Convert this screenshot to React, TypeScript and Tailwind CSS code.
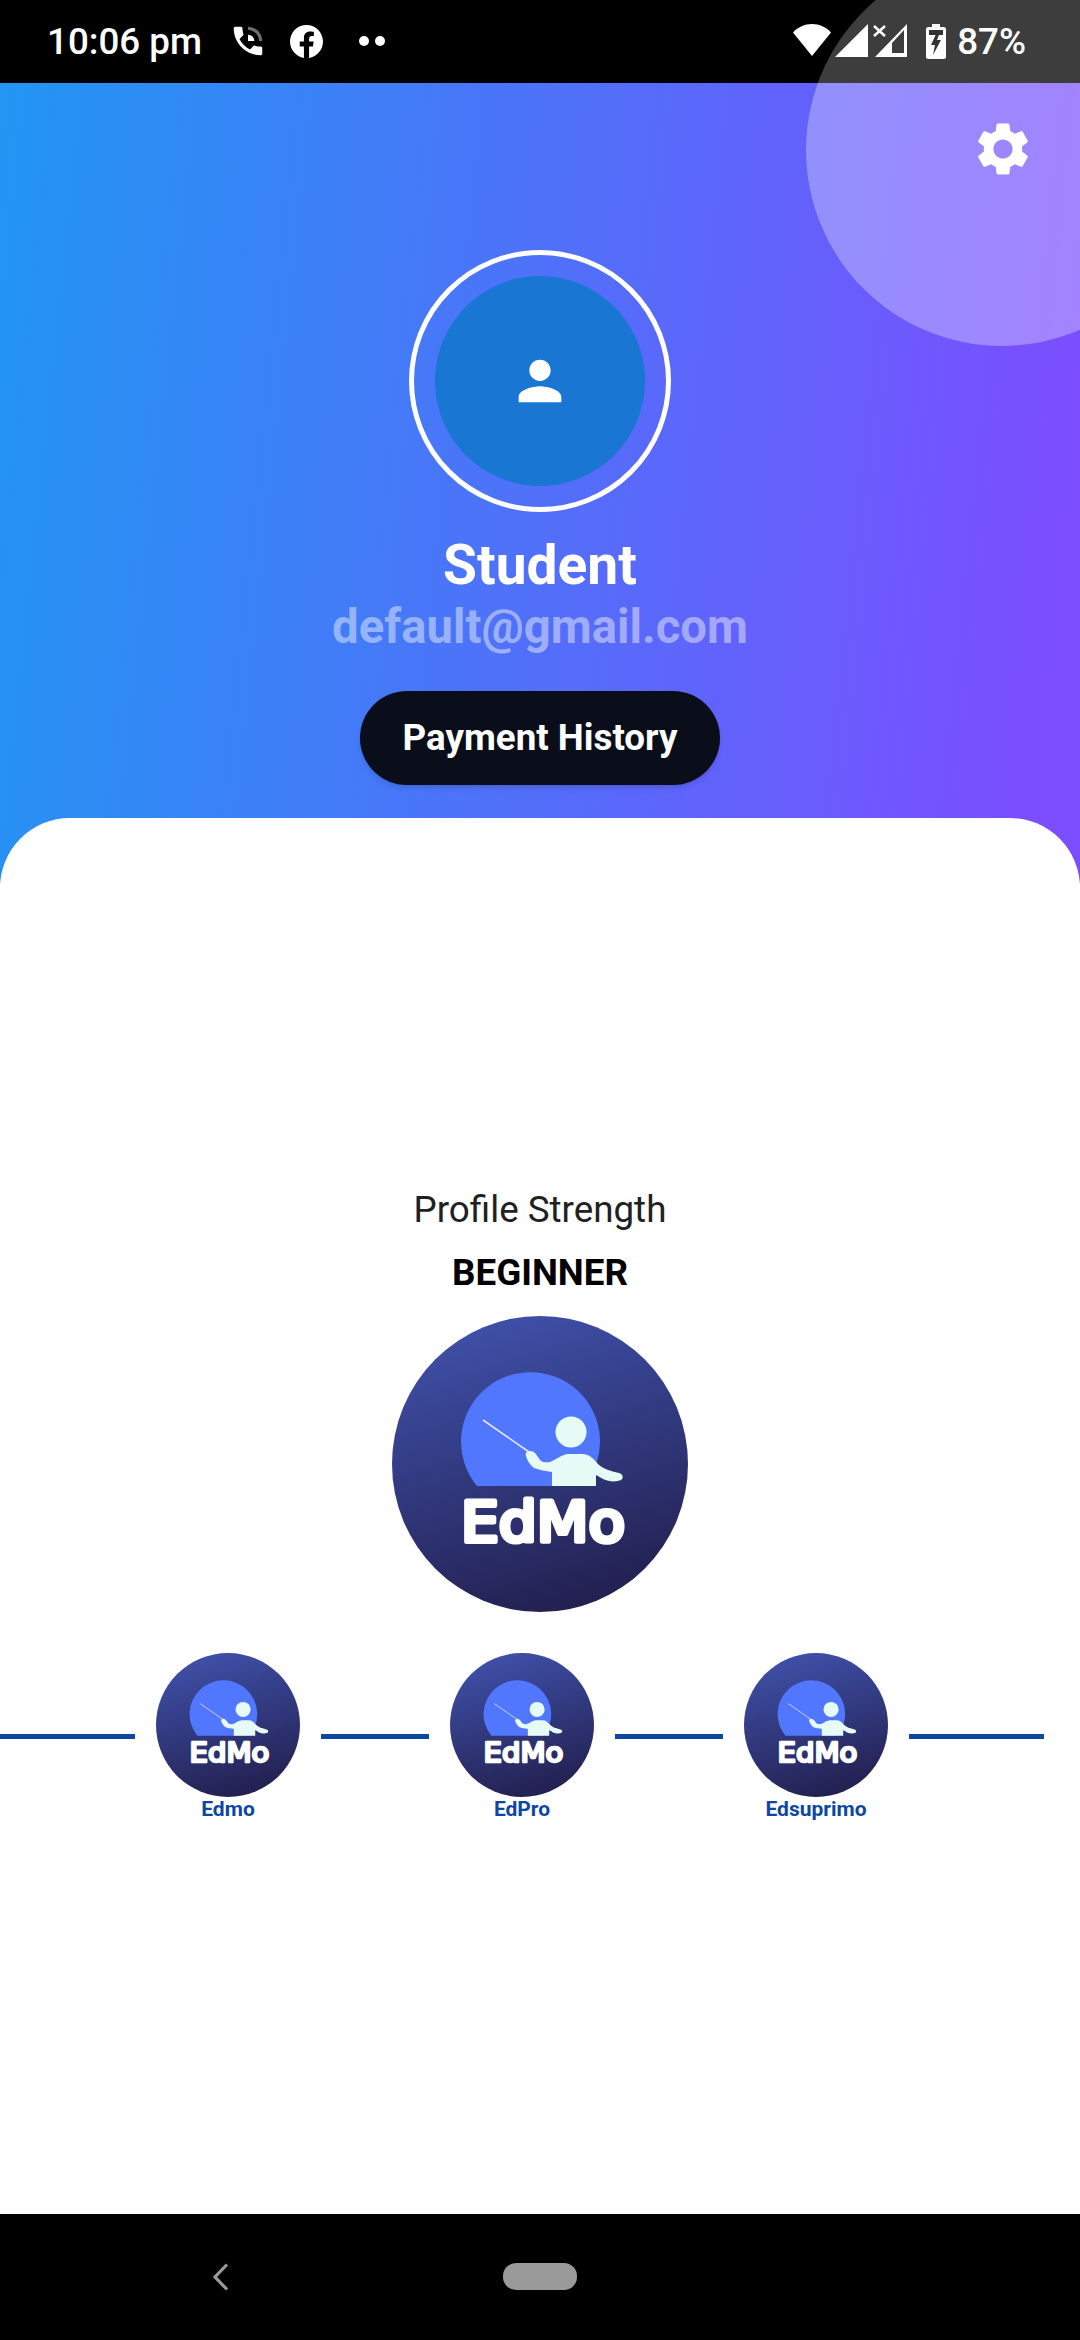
import { useId } from 'react';
import { MdPerson, MdSettings } from 'react-icons/md';

const font = { fontFamily: 'Roboto, sans-serif' };

function EdmoLogo({ size }: { size: number }) {
  const id = useId();
  return (
    <svg width={size} height={size} viewBox="0 0 296 296" className="block">
      <defs>
        <linearGradient id={id} x1="0.35" y1="0" x2="0.65" y2="1">
          <stop offset="0" stopColor="#3f50a8" />
          <stop offset="1" stopColor="#221f4e" />
        </linearGradient>
      </defs>
      <circle cx="148" cy="148" r="148" fill={`url(#${id})`} />
      <path d="M85 170A69.5 69.5 0 1 1 192 170Z" fill="#5177ff" />
      <path d="M91 104L137 136" stroke="#e6e6f0" strokeWidth="1.6" />
      <circle cx="179" cy="116" r="15.5" fill="#e6fbf5" />
      <path
        d="M138 135c4 0 6 3 8 6 3 5 6 6 12 5 6-2 10-7 18-8h14c7 0 11 4 15 9 5 6 14 8 22 10 4 1 5 5 2 7-4 2-12 2-18-1-3-2-5-3-7-4v11h-44v-14c-6-1-13-2-18-4-4-3-7-8-8-12-1-3 1-5 4-5z"
        fill="#e6fbf5"
      />
      <text
        x="69"
        y="224.500"
        textLength="164"
        lengthAdjust="spacingAndGlyphs"
        fontSize="55"
        fontFamily="'DejaVu Sans', sans-serif"
        fill="#ffffff"
        stroke="#ffffff"
        strokeWidth="5"
        strokeLinejoin="round"
      >
        EdMo
      </text>
    </svg>
  );
}

function Line({ width }: { width: string }) {
  return <div className={`h-[5px] mt-[81px] bg-[#0d47a1] ${width}`} />;
}

function Level({ name }: { name: string }) {
  return (
    <div className="w-[144px] flex flex-col items-center">
      <EdmoLogo size={144} />
      <p className="text-[21px] leading-[24px] font-bold text-[#0d47a1]">{name}</p>
    </div>
  );
}

function StatusBar() {
  return (
    <div className="relative overflow-hidden h-[83px] bg-black text-white flex items-center text-[36.75px] leading-[42px] font-medium pl-[47px] pr-[54px]">
      {/* corner circle carries on behind the status bar, dimmer here */}
      <div className="absolute left-[806px] -top-[46px] w-[392px] h-[392px] rounded-full bg-white/24" />
      <span className="mt-[1px]">10:06 pm</span>
      {/* call icon */}
      <svg width="38" height="38" viewBox="0 0 24 24" className="ml-[27px] -mt-[1px]">
        <path
          fill="#fff"
          d="M20 15.500c-1.250 0-2.450-.2-3.570-.57-.35-.11-.74-.03-1.020.24l-2.200 2.200c-2.830-1.440-5.150-3.750-6.590-6.590l2.200-2.210c.28-.26.36-.65.25-1C8.700 6.450 8.500 5.250 8.500 4c0-.55-.45-1-1-1H4c-.55 0-1 .45-1 1 0 9.390 7.610 17 17 17 .55 0 1-.45 1-1v-3.500c0-.55-.45-1-1-1z"
        />
        <path fill="#6f6f6f" d="M19 12h2c0-4.970-4.030-9-9-9v2c3.870 0 7 3.130 7 7z" />
        <path fill="#fff" d="M16 12h-4V8c2.200 0 4 1.800 4 4z" />
      </svg>
      {/* facebook */}
      <svg width="33" height="33" viewBox="0 0 24 24" className="ml-[23px] -mt-[1px]">
        <path
          fill="#fff"
          d="M24 12.070C24 5.400 18.630 0 12 0S0 5.400 0 12.070c0 6.030 4.390 11.020 10.130 11.930v-8.440H7.080v-3.490h3.050V9.410c0-3.020 1.790-4.690 4.530-4.690 1.310 0 2.680.23 2.680.23v2.970h-1.510c-1.490 0-1.960.93-1.960 1.880v2.270h3.330l-.53 3.490h-2.800V24C19.610 23.090 24 18.100 24 12.070z"
        />
      </svg>
      {/* dots */}
      <div className="ml-[36px] -mt-[1px] flex gap-[6px]">
        <div className="w-[10px] h-[10px] rounded-full bg-white" />
        <div className="w-[10px] h-[10px] rounded-full bg-white" />
      </div>
      <div className="flex-1" />
      {/* wifi */}
      <svg width="40" height="34" viewBox="0 0 40 34" className="relative -mt-[3px]">
        <path d="M20 33L1 9.500C6 4 12.500 1 20 1s14 3 19 8.500z" fill="#fff" />
      </svg>
      {/* sim 1 */}
      <svg width="33" height="34" viewBox="0 0 33 34" className="relative ml-[3px] -mt-[1px]">
        <path d="M33 0v33H0z" fill="#fff" />
      </svg>
      {/* sim 2, no data */}
      <svg width="35" height="36" viewBox="0 0 35 36" className="relative ml-[4px] -mt-[3px]">
        <path d="M2 4l11 10M13 4L2 14" stroke="#fff" strokeWidth="2.500" />
        <path fillRule="evenodd" d="M35 2v33H3zM20 21v10h12V8z" fill="#fff" />
      </svg>
      {/* battery */}
      <svg width="20" height="35" viewBox="0 0 20 35" className="relative ml-[19px]">
        <path
          d="M6 0h8v3h4c1 0 2 1 2 2v28c0 1-1 2-2 2H2c-1 0-2-1-2-2V5c0-1 1-2 2-2h4z"
          fill="#fff"
        />
        <path d="M3 6h14v5H3z" fill="#333" />
        <path d="M11 8l-6 13h4l-2 10 8-15h-4l3-8z" fill="#333" />
      </svg>
      <span className="relative ml-[11px] mt-[1px]">87%</span>
    </div>
  );
}

function Header() {
  return (
    <div className="relative overflow-hidden h-[800px] pt-[167px] flex flex-col items-center bg-[linear-gradient(96deg,#2196f3_0%,#7c4dff_96%)]">
      <div className="absolute left-[806px] -top-[129px] w-[392px] h-[392px] rounded-full bg-white/30" />
      <div className="absolute left-[971px] top-[34px]">
        <MdSettings size={64} color="#ffffff" />
      </div>
      <div className="w-[262px] h-[262px] rounded-full border-[5px] border-white flex items-center justify-center">
        <div className="w-[210px] h-[210px] rounded-full bg-[#1976d2] flex items-center justify-center">
          <MdPerson size={64} color="#ffffff" />
        </div>
      </div>
      <h1 className="text-[55.125px] leading-[66px] font-bold text-white mt-[20px]">Student</h1>
      <p className="text-[47.25px] leading-[56px] font-bold text-white/45 mt-[1px]">default@gmail.com</p>
      <button className="mt-[36px] w-[360px] h-[94px] rounded-full bg-[#0a0d1a] text-white text-[36.75px] font-bold shadow-md">
        Payment History
      </button>
    </div>
  );
}

export default function App() {
  return (
    <div className="relative w-[1080px] h-[2340px] overflow-hidden bg-white flex flex-col" style={font}>
      <StatusBar />
      <Header />
      <div className="-mt-[65px] flex-1 bg-white rounded-t-[70px] pt-[371px] relative">
        <p className="text-[36.75px] leading-[42px] text-[#212121] text-center">Profile Strength</p>
        <p className="text-[36.75px] leading-[42px] font-bold text-black text-center mt-[21px]">BEGINNER</p>
        <div className="flex justify-center mt-[22px]">
          <EdmoLogo size={296} />
        </div>
        <div className="flex gap-[21px] mt-[41px]">
          <Line width="w-[135px]" />
          <Level name="Edmo" />
          <Line width="w-[108px]" />
          <Level name="EdPro" />
          <Line width="w-[108px]" />
          <Level name="Edsuprimo" />
          <Line width="w-[135px]" />
        </div>
      </div>
      <div className="h-[126px] bg-black flex items-start pt-[49px] pl-[212px]">
        <svg width="17" height="28" viewBox="0 0 17 28" fill="none">
          <path d="M15 1.500L3 14l12 12.500" stroke="#9a9a9a" strokeWidth="3.200" />
        </svg>
        <div className="ml-[274px] w-[74px] h-[27px] rounded-[13px] bg-[#9a9a9a]" />
      </div>
    </div>
  );
}
